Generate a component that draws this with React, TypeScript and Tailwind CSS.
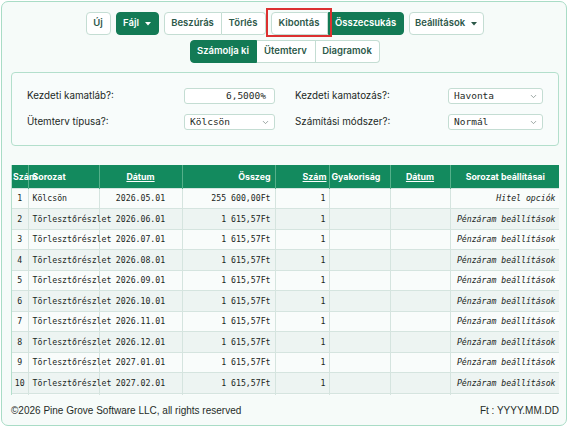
import { ChevronDown } from "lucide-react";

const mono = { fontFamily: '"DejaVu Sans Mono", "Liberation Mono", monospace' };

type Row = { n: number; kind: string; date: string; amount: string; opt: string };

const rows: Row[] = [
  { n: 1, kind: "Kölcsön", date: "2026.05.01", amount: "255 600,00Ft", opt: "Hitel opciók" },
  ...["2026.06.01", "2026.07.01", "2026.08.01", "2026.09.01", "2026.10.01", "2026.11.01", "2026.12.01", "2027.01.01", "2027.02.01"].map(
    (d, i) => ({ n: i + 2, kind: "Törlesztőrészlet", date: d, amount: "1 615,57Ft", opt: "Pénzáram beállítások" })
  ),
];

const btn =
  "h-[23px] flex items-center justify-center border border-[#c4ddd3] bg-white text-[#2c5849] text-[9.5px] font-semibold";
const btnOn =
  "h-[23px] flex items-center justify-center border border-[#137a55] bg-[#137a55] text-white text-[9.5px] font-semibold";

const Caret = ({ className }: { className: string }) => (
  <svg width="6" height="4" viewBox="0 0 6 4" className={className}>
    <path d="M0 0h6L3 3.5z" fill="currentColor" />
  </svg>
);

const Field = ({ label, children }: { label: string; children: React.ReactNode }) => (
  <div className="flex items-center justify-between h-[16px]">
    <span className="text-[9.8px] text-[#1c2925]">{label}</span>
    {children}
  </div>
);

const SelectBox = ({ value, w }: { value: string; w: string }) => (
  <div
    className={`${w} h-[16px] flex items-center justify-between pl-[5px] pr-[4px] bg-white border border-[#c4ddd3] rounded-[3px] text-[9.5px] text-[#1f2c28]`}
    style={mono}
  >
    <span>{value}</span>
    <ChevronDown size={9} className="text-[#7b8a85]" />
  </div>
);

const cell = "border border-[#d5e4df]";

export default function App() {
  return (
    <div className="w-[570px] h-[427px] bg-white p-[1px]" style={{ fontFamily: "Inter, sans-serif" }}>
      <div className="w-[566px] h-[425px] flex flex-col rounded-[7px] border border-[#a9dcc6] bg-[#f6fbf9] pl-[9px] pr-[6px] pt-[10px]">
        {/* toolbar */}
        <div className="flex justify-center gap-[5px] pr-[2px]">
          <button className={`${btn} w-[25px] rounded-[4px]`}>Új</button>
          <button className={`${btnOn} w-[43px] rounded-[4px] gap-[6px]`}>
            Fájl <Caret className="text-white" />
          </button>
          <div className="flex">
            <button className={`${btn} w-[58px] rounded-l-[4px]`}>Beszúrás</button>
            <button className={`${btn} w-[44px] rounded-r-[4px] border-l-0`}>Törlés</button>
          </div>
          <div className="flex">
            <div className="relative">
              <button className={`${btn} w-[57px] rounded-l-[4px]`}>Kibontás</button>
              <span className="absolute -left-[5px] -right-[4px] -top-[4px] -bottom-[2px] border-2 border-[#dc3030] pointer-events-none" />
            </div>
            <button className={`${btnOn} w-[76px] rounded-r-[4px]`}>Összecsukás</button>
          </div>
          <button className={`${btn} w-[75px] rounded-[4px] gap-[6px]`}>
            Beállítások <Caret className="text-[#2c5849]" />
          </button>
        </div>
        <div className="flex justify-center mt-[5px] pr-[2px]">
          <button className={`${btnOn} w-[67px] rounded-l-[4px]`}>Számolja ki</button>
          <button className={`${btn} w-[59px] border-l-0`}>Ütemterv</button>
          <button className={`${btn} w-[64px] rounded-r-[4px] border-l-0`}>Diagramok</button>
        </div>

        {/* settings */}
        <div className="mt-[9px] w-[548px] h-[74px] border border-[#b3dfcc] rounded-[4px] bg-[#f8fcfb] px-[15px] pt-[15px] grid grid-cols-2 content-start gap-x-[20px] gap-y-[10px]">
          <Field label="Kezdeti kamatláb?:">
            <div
              className="w-[91px] h-[16px] flex items-center justify-end pr-[8px] bg-white border border-[#c4ddd3] rounded-[3px] text-[9.5px] text-[#1f2c28]"
              style={mono}
            >
              6,5000%
            </div>
          </Field>
          <Field label="Kezdeti kamatozás?:">
            <SelectBox value="Havonta" w="w-[95px]" />
          </Field>
          <Field label="Ütemterv típusa?:">
            <SelectBox value="Kölcsön" w="w-[91px]" />
          </Field>
          <Field label="Számítási módszer?:">
            <SelectBox value="Normál" w="w-[95px]" />
          </Field>
        </div>

        {/* schedule table */}
        <div className="mt-[19px] w-[548px] h-[230px] overflow-hidden border-l border-[#b3dfcc]">
          <table className="table-fixed border-collapse w-[548px]">
            <colgroup>
              <col className="w-[16px]" />
              <col className="w-[71px]" />
              <col className="w-[83px]" />
              <col className="w-[93px]" />
              <col className="w-[54px]" />
              <col className="w-[61px]" />
              <col className="w-[60px]" />
              <col className="w-[110px]" />
            </colgroup>
            <thead>
              <tr className="h-[23px] bg-[#138a5e] text-white text-[8.8px] font-semibold">
                <th className="text-left pl-[1px] whitespace-nowrap overflow-visible border-r border-[#55b08a]">Szám</th>
                <th className="text-left pl-[4px] border-r border-[#55b08a]">Sorozat</th>
                <th className="text-center border-r border-[#55b08a]">
                  <span className="underline">Dátum</span>
                </th>
                <th className="text-right pr-[4px] border-r border-[#55b08a]">Összeg</th>
                <th className="text-right pr-[2px] border-r border-[#55b08a]">
                  <span className="underline">Szám</span>
                </th>
                <th className="text-left pl-[2px] border-r border-[#55b08a]">Gyakoriság</th>
                <th className="text-center border-r border-[#55b08a]">
                  <span className="underline">Dátum</span>
                </th>
                <th className="text-center">Sorozat beállításai</th>
              </tr>
            </thead>
            <tbody className="text-[8.2px] text-[#1a2622]" style={mono}>
              {rows.map((r) => (
                <tr key={r.n} className={`h-[20.5px] ${r.n % 2 === 0 ? "bg-[#edf4f2]" : "bg-[#f9fcfb]"}`}>
                  <td className={`text-center ${cell} border-l-0`}>{r.n}</td>
                  <td className={`pl-[4px] whitespace-nowrap overflow-visible ${cell}`}>{r.kind}</td>
                  <td className={`text-center ${cell}`}>{r.date}</td>
                  <td className={`text-right pr-[4px] ${cell}`}>{r.amount}</td>
                  <td className={`text-right pr-[3px] ${cell}`}>1</td>
                  <td className={cell}></td>
                  <td className={cell}></td>
                  <td className={`text-right pr-[4px] italic whitespace-nowrap ${cell}`}>{r.opt}</td>
                </tr>
              ))}
              {/* next row peeks in below the scroll edge */}
              <tr className="h-[20.5px] bg-[#f9fcfb]">
                <td className={`${cell} border-l-0`}></td>
                <td className={cell}></td>
                <td className={cell}></td>
                <td className={cell}></td>
                <td className={cell}></td>
                <td className={cell}></td>
                <td className={cell}></td>
                <td className={cell}></td>
              </tr>
            </tbody>
          </table>
        </div>

        {/* footer */}
        <div
          className="w-[548px] mt-[8px] flex justify-between text-[10px] text-[#1f2c28]"
          style={{ fontFamily: '"Liberation Sans", Arial, sans-serif' }}
        >
          <span>©2026 Pine Grove Software LLC, all rights reserved</span>
          <span>Ft : YYYY.MM.DD</span>
        </div>
      </div>
    </div>
  );
}
